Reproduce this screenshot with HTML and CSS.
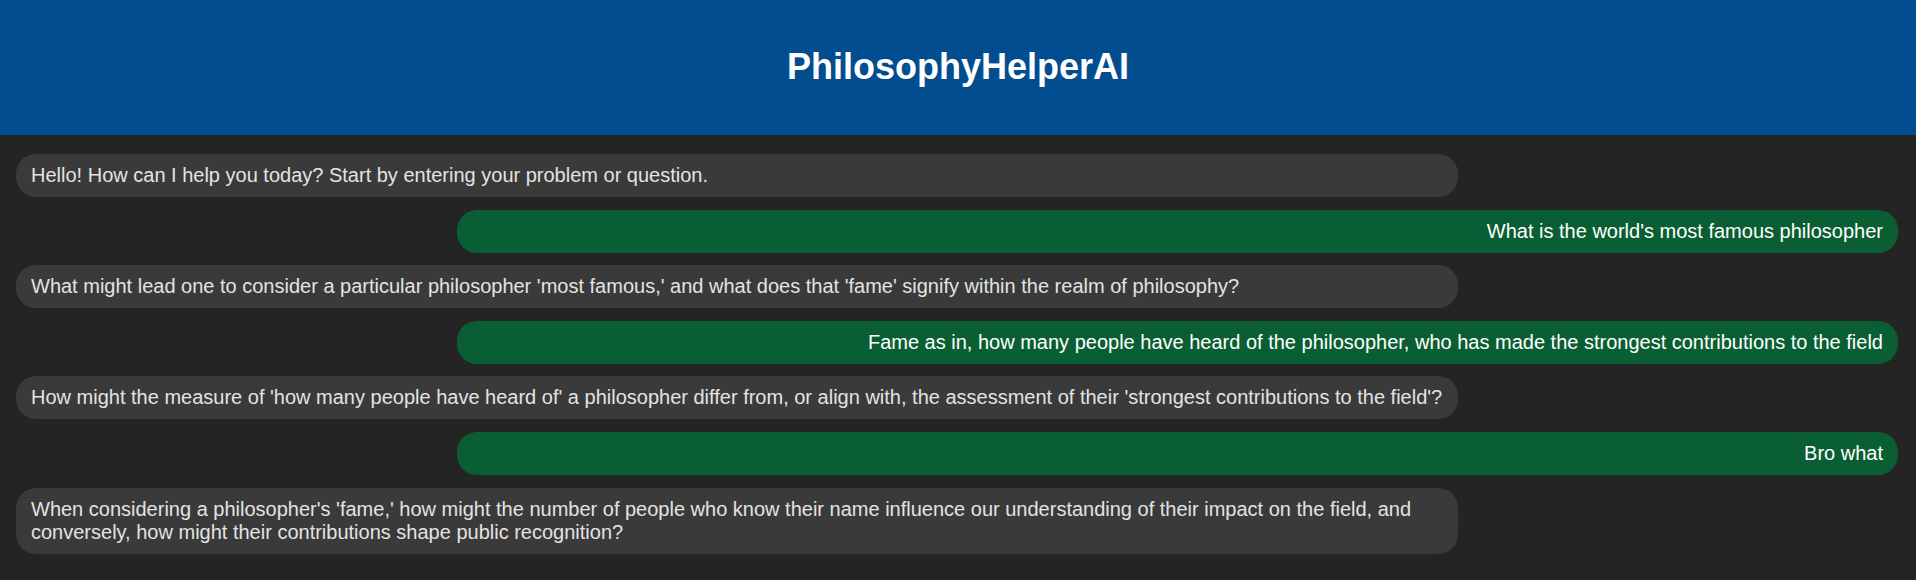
FILE: index.html
```html
<!DOCTYPE html>
<html lang="en">
<head>
<meta charset="utf-8">
<title>PhilosophyHelperAI</title>
<link rel="stylesheet" href="styles.css">
</head>
<body>
<header class="header">
  <h1 class="title">PhilosophyHelperAI</h1>
</header>
<main class="chat">
  <div class="msg bot">Hello! How can I help you today? Start by entering your problem or question.</div>
  <div class="msg user">What is the world's most famous philosopher</div>
  <div class="msg bot">What might lead one to consider a particular philosopher 'most famous,' and what does that 'fame' signify within the realm of philosophy?</div>
  <div class="msg user">Fame as in, how many people have heard of the philosopher, who has made the strongest contributions to the field</div>
  <div class="msg bot">How might the measure of 'how many people have heard of' a philosopher differ from, or align with, the assessment of their 'strongest contributions to the field'?</div>
  <div class="msg user">Bro what</div>
  <div class="msg bot">When considering a philosopher's 'fame,' how might the number of people who know their name influence our understanding of their impact on the field, and conversely, how might their contributions shape public recognition?</div>
</main>
</body>
</html>
```
FILE: styles.css
```css
html, body {
  margin: 0;
  padding: 0;
  background: #242424;
  font-family: "Liberation Sans", Arial, sans-serif;
}

.header {
  background: #024d8f;
  height: 135px;
  display: flex;
  align-items: center;
  justify-content: center;
}

.title {
  margin: 0;
  color: #ffffff;
  font-size: 36px;
  font-weight: bold;
  line-height: 41px;
  position: relative;
  top: -1px;
}

.chat {
  display: flex;
  flex-direction: column;
  align-items: flex-start;
  gap: 12.6px;
  padding: 19px 18px 20px 16px;
}

.msg {
  max-width: 75%;
  padding: 10px 15px;
  border-radius: 20px;
  font-size: 20px;
  line-height: 23px;
}

.bot {
  background: #3a3a3a;
  color: #e3e3e3;
  align-self: flex-start;
  width: 75%;
}

.user {
  background: #0a5e33;
  color: #ffffff;
  align-self: flex-end;
  width: 75%;
  text-align: right;
}
```
